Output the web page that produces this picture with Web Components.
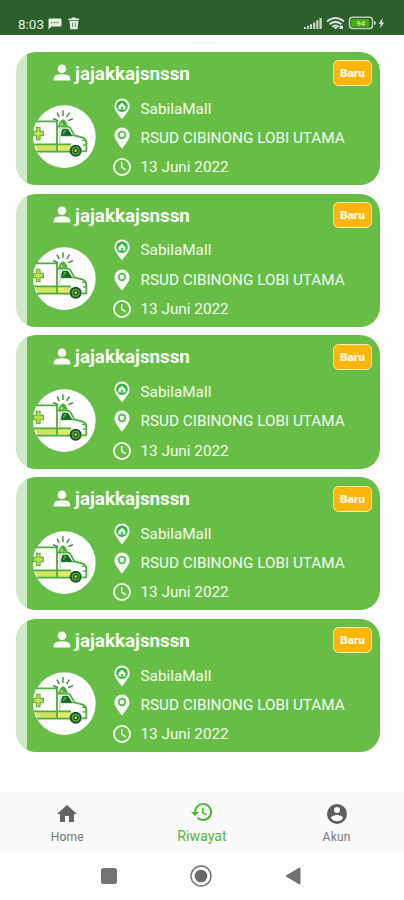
<!DOCTYPE html>
<html lang="id">
<head>
<meta charset="utf-8">
<title>Riwayat</title>
<style>
html,body{margin:0;height:100%;background:#fefefe;font-family:Roboto,"Noto Sans",sans-serif}
</style>
</head>
<body>
<app-screen></app-screen>
<script>
const define=(name,html)=>customElements.define(name,class extends HTMLElement{
  constructor(){
    super();
    const t=document.createElement('template');
    t.innerHTML=html;
    this.attachShadow({mode:'open'}).append(t.content.cloneNode(true));
  }
});

define('status-bar',`
<style>
:host{display:flex;box-sizing:border-box;height:35px;background:#2d5f2d;color:#e6efe3;padding:12px 18px 0 18px;align-items:center}
time{font-size:13.5px;font-weight:400;width:29px;white-space:nowrap}
svg{display:block}
.sp{flex:1}
</style>
<time>8:03</time>
<svg width="34" height="16" viewBox="0 0 34 16"><path fill="#e6efe3" d="M2.500 2.500h11q1 0 1 1v6q0 1-1 1H4.500L1.500 13.500V3.500q0-1 1-1z"/><path stroke="#5d8259" stroke-width="1.400" stroke-dasharray="1.600 1.200" d="M4 6.600h8"/><path fill="#e6efe3" d="M21.500 2.500h3l.8-1h3l.8 1h3v1.800H21.500zM22.500 5h8.800l-.7 8.300H23.300z"/><path stroke="#6c8f68" d="M25.500 6.500v4.500M28.300 6.500v4.500"/></svg>
<span class="sp"></span>
<svg width="84" height="16" viewBox="0 0 84 16">
<g fill="#c7d8c4"><path d="M2 11h2v2H2zM5 9.800h2V13H5zM8 8.300h2V13H8zM11 6.500h2.200V13H11zM14.200 4.300h2.200V13h-2.200zM17.400 2h2.400v11h-2.400z"/></g>
<g fill="none" stroke="#d7e3d4" stroke-width="2"><path d="M25 5.500q8.500-7 17 0M27.500 8.300q6-4.900 12 0M30.300 10.800q3.200-2.600 6.400 0"/></g><path fill="#d7e3d4" d="M31.500 11h4.400L33.700 13.500zM37.500 9.800h3.500V13h-3.500z"/>
<rect x="47.500" y="1.200" width="23" height="11.300" rx="3.200" fill="#2d5f2d" stroke="#b9d2b2" stroke-width="1.600"/><rect x="49.300" y="3" width="18" height="7.800" rx="1.500" fill="#45ae16"/><path d="M72 5q2 0 2 2t-2 2z" fill="#b9d2b2"/>
<text x="58.800" y="9.600" text-anchor="middle" font-family="Roboto,sans-serif" font-weight="500" font-size="7.500" fill="#c6eeaf">94</text>
<path fill="#e1eadf" d="M80.700 2l-4 5.700h2.300l-1.300 4.800 4.500-6h-2.400z"/></svg>`);

define('ambulance-avatar',`
<style>:host{display:block;width:64px;height:64px}svg{display:block}</style>
<svg width="64" height="64" viewBox="21 15 192 192">
<circle cx="118" cy="110" r="94" fill="#fff"/>
<path d="M34 62h62v94H37q-11-17-11-46V85q5-12 8-23z" fill="#fff"/>
<path d="M31 135h66v18H38z" fill="#cfe35f"/><path d="M98 135h42v18H98z" fill="#e0e96d"/>
<g fill="none" stroke="#4dae3c" stroke-width="5.500" stroke-linejoin="round">
<path d="M31 64h65v92M27 133h111M36 155h101M97 80h31q6 0 9 6l11 20 25 7q9 3 11 14v27h-13"/><path d="M105 84v45" stroke="#a8d69b" stroke-width="3"/><path d="M150 107h-42M171 121h13M174 135h10" stroke-width="4"/></g>
<path d="M113 86h16l13 21h-34q0-13 5-21z" fill="#15652d"/><path d="M117 90h9l-10 13h-3z" fill="#55a93c"/>
<path d="M99 77l6-12q9-15 18 0l6 12z" fill="#4dad3c"/><path d="M106 75l4-9 5 9z" fill="#c4dd65"/>
<path d="M114 31v17M96 38l7 13M133 38l-8 13M84 56l15 6M144 56l-14 6" stroke="#397a42" stroke-width="4" fill="none"/>
<path d="M35 82h10v12h10v13H45v12H35v-12h-9V94h9z" fill="#c2df55" stroke="#6eb441" stroke-width="4"/>
<circle cx="152" cy="152" r="18" fill="#145429"/><circle cx="152" cy="152" r="10" fill="none" stroke="#69a83f" stroke-width="4"/><circle cx="152" cy="152" r="4" fill="#c4dd65"/>
</svg>`);

define('status-badge',`
<style>:host{display:flex;box-sizing:border-box;width:39px;height:26px;border:1.500px solid #f7ecb0;border-radius:5.500px;background:#fdb50c;color:#fffbe6;font-size:11.800px;font-weight:900;align-items:center;justify-content:center}</style><slot></slot>`);

define('info-row',`
<style>
:host{display:flex;align-items:center;height:29.300px;color:#f4fbf1;font-size:15.300px;white-space:nowrap}
::slotted(svg){display:block;width:20px;height:24px;margin-right:8.500px;flex:none}
</style><slot name="icon"></slot><slot></slot>`);

define('trip-card',`
<style>
:host{display:block;box-sizing:border-box;height:133.300px;border-radius:20px;overflow:hidden;background:linear-gradient(90deg,#cdeac4 11.300px,#67bd45 11.300px)}
header{display:flex;height:43px;align-items:center;padding:0 8px 0 36px;box-sizing:border-box;color:#fbfffa}
h2{margin:1px auto 0 3px;font-size:18.800px;line-height:24px;font-weight:700}
.body{display:flex;padding-left:16px}
ambulance-avatar{margin-top:10.500px}
.list{margin:-1px 0 0 16px}
</style>
<header><svg width="20" height="20" viewBox="0 0 20 20" fill="#fbfffa"><circle cx="10" cy="5.800" r="4.300"/><path d="M1.700 17.500v-2q0-4.300 8.300-4.300t8.300 4.300v2z"/></svg><h2><slot name="name"></slot></h2><status-badge><slot name="status"></slot></status-badge></header>
<div class="body"><ambulance-avatar></ambulance-avatar><div class="list">
<info-row class="from"><svg slot="icon" viewBox="0 0 20 24"><path fill="#f4fbf1" d="M10 22.500C7 18 2.300 13.500 2.300 9.200a7.700 7.700 0 0 1 15.400 0C17.700 13.500 13 18 10 22.500z"/><circle cx="10" cy="9.300" r="5.700" fill="#36b044"/><path fill="#dff3da" d="M10 5.500l3.700 3.500v3.500H6.300V9z"/><path fill="#5abb53" d="M9 10h2v2.500H9z"/></svg><slot name="from"></slot></info-row>
<info-row class="to"><svg slot="icon" viewBox="0 0 20 24"><path fill="#f4fbf1" d="M10 22.800C7 18.500 2.400 13.600 2.400 9.200a7.600 7.600 0 0 1 15.200 0C17.600 13.600 13 18.500 10 22.800z"/><circle cx="10" cy="9" r="3.300" fill="none" stroke="#58b65a" stroke-width="1.700"/></svg><slot name="to"></slot></info-row>
<info-row class="date"><svg slot="icon" viewBox="0 0 20 24"><circle cx="10" cy="12" r="8.100" fill="none" stroke="#f4fbf1" stroke-width="1.800"/><path d="M9.700 7v5.200l4 2.700" fill="none" stroke="#f4fbf1" stroke-width="1.500"/></svg><slot name="date"></slot></info-row>
</div></div>`);

define('nav-item',`
<style>
:host{display:flex;flex:1;flex-direction:column;align-items:center;color:#757575;font-size:12px;line-height:16px;letter-spacing:.25px}
:host([active]){color:#55b537;font-size:14.200px;letter-spacing:0}
::slotted(svg){display:block;width:24px;height:24px;margin-bottom:2.500px}
:host([active]) ::slotted(svg){margin-top:-2.500px;margin-bottom:4px}
</style><slot name="icon"></slot><slot></slot>`);

define('bottom-nav',`<style>:host{display:flex;box-sizing:border-box;height:60px;background:#fafafa;padding-top:10px}</style><slot></slot>`);

define('system-nav',`
<style>:host{display:flex;box-sizing:border-box;height:48px;padding-right:1.500px;background:#fefefe;align-items:center;justify-content:center;gap:68px}svg{display:block}</style>
<svg width="24" height="24" viewBox="0 0 24 24"><rect x="4" y="4" width="16" height="16" rx="2.500" fill="#737373"/></svg>
<svg width="24" height="24" viewBox="0 0 24 24"><circle cx="12" cy="12" r="10" fill="none" stroke="#737373" stroke-width="1.500"/><circle cx="12" cy="12" r="6.300" fill="#686868"/></svg>
<svg width="24" height="24" viewBox="0 0 24 24"><path d="M5 12L19 3.800v16.400z" fill="#707070" stroke="#707070" stroke-linejoin="round"/></svg>`);

define('app-screen',`
<style>
:host{display:flex;flex-direction:column;height:900px;width:404px;overflow:hidden}
main{flex:1;display:flex;flex-direction:column;gap:8.450px;padding:6px 24px 0 16px}
.hint{width:22px;height:3px;margin:0 0 -.5px 177px;border-radius:11px 11px 0 0;background:#f7f7f7}
</style>
<status-bar></status-bar>
<main><div class="hint"></div></main>
<bottom-nav>
<nav-item><svg slot="icon" viewBox="0 0 24 24"><path fill="#646464" d="M10 20v-6h4v6h5v-8h3L12 3 2 12h3v8z"/></svg>Home</nav-item>
<nav-item active><svg slot="icon" viewBox="0 0 24 24"><path fill="#4db32e" d="M13 3a9 9 0 0 0-9 9H1l3.900 3.900.1.100L9 12H6a7 7 0 1 1 2.100 4.900l-1.400 1.400A9 9 0 1 0 13 3zm-1 5v5l4.300 2.500.7-1.200-3.500-2.100V8z"/></svg>Riwayat</nav-item>
<nav-item><svg slot="icon" viewBox="0 0 24 24"><path fill="#5e5e5e" d="M12 2a10 10 0 1 0 0 20 10 10 0 0 0 0-20zm0 3a3 3 0 1 1 0 6 3 3 0 0 1 0-6zm0 14.200a7.200 7.200 0 0 1-6-3.220c.03-1.990 4-3.080 6-3.080 1.990 0 5.970 1.090 6 3.080a7.200 7.200 0 0 1-6 3.220z"/></svg>Akun</nav-item>
</bottom-nav>
<system-nav></system-nav>`);

const main=document.querySelector('app-screen').shadowRoot.querySelector('main');
for(let i=0;i<5;i++){
  const card=document.createElement('trip-card');
  card.innerHTML='<span slot="name">jajakkajsnssn</span><span slot="status">Baru</span><span slot="from">SabilaMall</span><span slot="to">RSUD CIBINONG LOBI UTAMA</span><span slot="date">13 Juni 2022</span>';
  main.append(card);
}
</script>
</body>
</html>
